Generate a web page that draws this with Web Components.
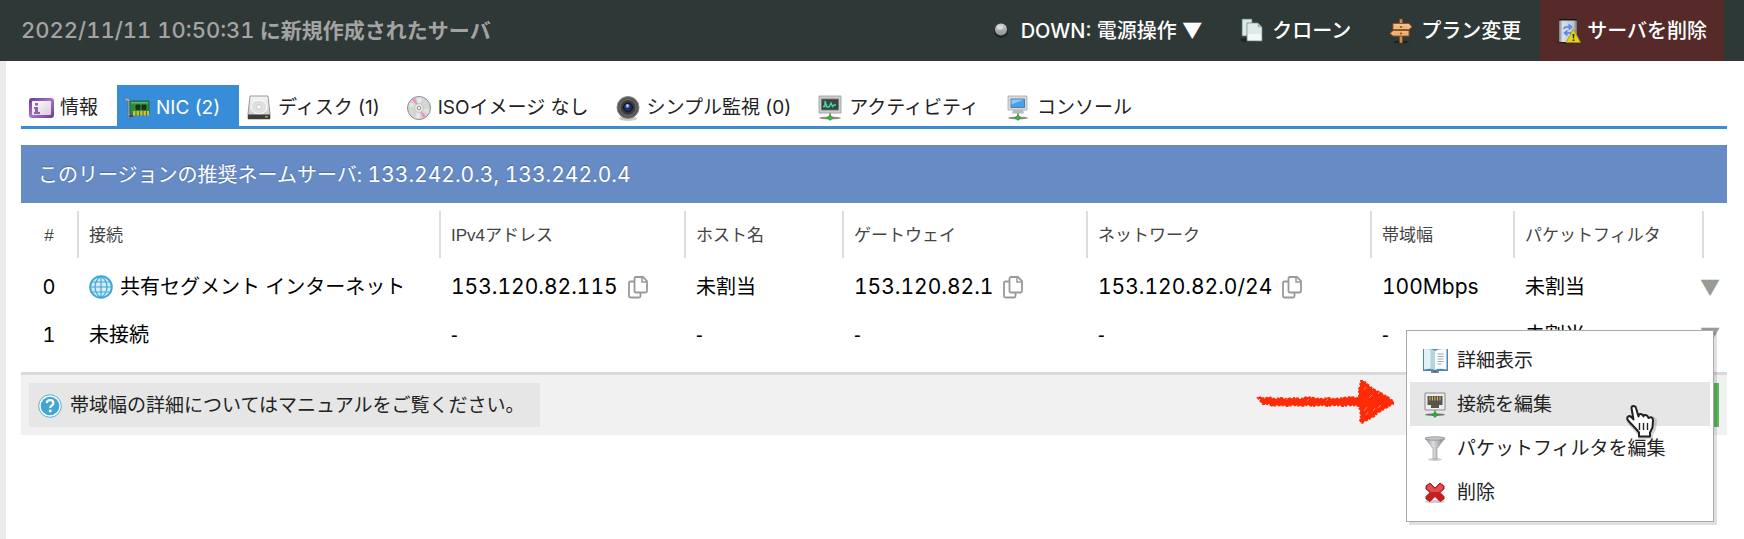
<!DOCTYPE html>
<html lang="ja">
<head>
<meta charset="utf-8">
<title>サーバ - NIC</title>
<meta name="viewport" content="width=device-width, initial-scale=1">
<style>
  body {
    margin: 0;
    background: #fff;
    color: #000;
    font-family: "Liberation Sans", "Noto Sans CJK JP", sans-serif;
    font-size: 20px;
    line-height: 24px;
  }
</style>
</head>
<body>
<server-page></server-page>

<script>
const define = (name, html, setup) => {
  const template = document.createElement('template');
  template.innerHTML = html;
  customElements.define(name, class extends HTMLElement {
    constructor() {
      super();
      this.attachShadow({ mode: 'open' }).append(template.content.cloneNode(true));
    }
    connectedCallback() {
      if (setup) setup(this, this.shadowRoot);
    }
  });
};

/* Icon drawings, all on a 24 x 24 grid. */
const ICONS = {
  dot: `<defs><linearGradient id="g" x2="0" y2="1"><stop stop-color="#d2d2d2"/><stop offset="1" stop-color="#8d8d8d"/></linearGradient></defs>
    <ellipse cx="12" cy="13" rx="7" ry="6" fill="#1d2625"/><circle cx="12" cy="10.500" r="6" fill="url(#g)"/><ellipse cx="11" cy="8.500" rx="3" ry="2" fill="#ddd"/>`,
  clone: `<ellipse cx="10" cy="21" rx="10" ry="2" fill="#1b2423"/>
    <path d="M2 0h10v17H2z" fill="#dbe8e8" stroke="#55706e" stroke-width=".7"/>
    <path d="M7 4h11l4 4v14H7z" fill="#f1f8f7" stroke="#6b8583" stroke-width=".8"/><path d="M17.500 4v4.500H22z" fill="#9fb4b2"/><path d="M8 5h9v3l4 2v5H8z" fill="#dcebea"/>`,
  sign: `<ellipse cx="12" cy="23" rx="8" ry="1.500" fill="#1c2322"/>
    <path d="M10.500 0h3v24h-3z" fill="#d58a45" stroke="#7b451a" stroke-width=".6"/>
    <path d="M4 4.500h16l3 3.300-3 2.700H4z" fill="#f6bf85" stroke="#8d5425" stroke-width="1"/>
    <path d="M20 11.500H4L1 14.500l3 2.500h16z" fill="#f3b478" stroke="#8d5425" stroke-width="1"/>
    <path d="M6 8h12M5 14.500h13" stroke="#dfa067" stroke-width=".8"/><circle cx="12" cy="8" r=".9" fill="#6f3d16"/><circle cx="12" cy="14.500" r=".9" fill="#6f3d16"/>`,
  server: `<defs><linearGradient id="g"><stop stop-color="#777d86"/><stop offset=".2" stop-color="#d9dee7"/><stop offset=".8" stop-color="#bcc3cd"/><stop offset="1" stop-color="#6d737c"/></linearGradient></defs>
    <ellipse cx="10" cy="23" rx="10" ry="1.500" fill="#2b1514"/><path d="M2 0h18v23H2z" fill="url(#g)"/><path d="M2 0h18v1.500H2z" fill="#15171a"/>
    <path d="M7 10q0-2 2-2h4M11.500 5.500l3 2.500-3 2.500M14 14H8M10.500 11.500 7.500 14l3 2.500" fill="none" stroke="#4c82e8" stroke-width="1.500"/>
    <path d="M16.500 10 23.500 23.500H9z" fill="#e5d21e" stroke="#a09310" stroke-width=".8"/><path d="M15.500 15h2l-.4 4.500h-1.200zM15.600 20.500h1.800v1.600h-1.800z" fill="#333"/>`,
  info: `<defs><linearGradient id="g" x2="1" y2="1"><stop stop-color="#6a3990"/><stop offset=".5" stop-color="#a775c4"/><stop offset="1" stop-color="#6a3990"/></linearGradient><linearGradient id="h" x2="1" y2="1"><stop stop-color="#fff"/><stop offset="1" stop-color="#d8cce2"/></linearGradient></defs>
    <rect x="0" y="2" width="25" height="20" rx="3" fill="url(#g)"/><rect x="3" y="5" width="19" height="14" rx="1" fill="url(#h)"/>
    <path d="M6 7h3v2.500H6zM5 11h4v5h2v2H5v-2h1v-3H5z" fill="#8f62ae"/>`,
  nic: `<path d="M0 2h3l2 2v18H3V5H0z" fill="#9aaebf" stroke="#51687d" stroke-width=".6"/>
    <path d="M5 5h19v13H5z" fill="#2d8a3e" stroke="#1b5a28" stroke-width=".8"/><path d="M6 6h17v1.500H6z" fill="#60b56c"/>
    <path d="M11 9h4v4.500h-4zM17 9h4v4.500h-4z" fill="#20301f" stroke="#123016" stroke-width=".8"/><path d="M8 15h16v4.500H8z" fill="#d3bd3c"/><path d="M11 15v5M14.500 15v5M18 15v5M21.500 15v5" stroke="#397b32" stroke-width="1.100"/><path d="M4 20h4" stroke="#35505a" stroke-width="2"/>`,
  disk: `<defs><linearGradient id="g" x2="0" y2="1"><stop stop-color="#f5f5f5"/><stop offset="1" stop-color="#c4c4c4"/></linearGradient></defs>
    <path d="M3 0h18l2 18v5H1v-5z" fill="url(#g)" stroke="#8f8f8f" stroke-width=".9"/><ellipse cx="12" cy="11" rx="8" ry="7" fill="#e0e0e0" stroke="#fff" stroke-width="1"/><ellipse cx="12" cy="11" rx="2.500" ry="2.300" fill="#fafafa" stroke="#bbb" stroke-width=".7"/>
    <path d="M1 18.500h22v4.500H1z" fill="#3c3c3c"/><path d="M18 20h3v1.500h-3z" fill="#7ac52c"/>`,
  disc: `<circle cx="12" cy="12" r="11.500" fill="#d6d6d6" stroke="#8c8c8c" stroke-width="1"/><path d="M12 12 5 3.700 8 1.900zM12 12l7 8.300-3 1.800z" fill="#f08fc4"/><path d="M12 12 10 1.500l5 .2zM12 12 13 22.500l-5-.5z" fill="#e9e9e9"/><path d="M12 12 1.500 10.500l1.500-4zM12 12 22.500 13.500 21 17.500z" fill="#e2e9d0"/>
    <circle cx="12" cy="12" r="4.300" fill="#eee" stroke="#bbb" stroke-width=".8"/><circle cx="12" cy="12" r="1.800" fill="#fff" stroke="#888" stroke-width="1"/>`,
  lens: `<ellipse cx="12" cy="22.500" rx="9" ry="2.500" fill="#ccc"/><circle cx="12" cy="11.500" r="11" fill="#575757" stroke="#8b8b8b" stroke-width="1"/><circle cx="12" cy="11.500" r="8" fill="#3c3c3c" stroke="#707070" stroke-width="1"/><circle cx="12" cy="11.500" r="4.500" fill="#1c2c5d" stroke="#111" stroke-width="1"/><circle cx="11.500" cy="10" r="2" fill="#6f92d0"/><circle cx="11.500" cy="9.500" r=".9" fill="#dbe6fb"/>`,
  activity: `<path d="M1 0h22v17H1z" fill="#cdcdcd" stroke="#999" stroke-width=".8"/><path d="M3.500 3h17v11h-17z" fill="#3b4543" stroke="#737373" stroke-width=".8"/><path d="M5 10.500h2V5l2 6h2l2-4 1.500 3.500L16 9h2" fill="none" stroke="#43e0a2" stroke-width="1.300"/>
    <path d="M11 17h2v4h-2z" fill="#999"/><ellipse cx="12" cy="22" rx="11" ry="1.500" fill="#8c8c8c"/><path d="M12 19 15 21.700 12 24.400 9 21.700z" fill="#31bb36" stroke="#27852b" stroke-width=".6"/>`,
  console: `<path d="M2 0h19v14H2z" fill="#d8d8d8" stroke="#aaa" stroke-width=".8"/><path d="M5 3h13.500v8.500H5z" fill="#4b9fe5" stroke="#2d75b3" stroke-width=".8"/><path d="M5.500 3.500H18L5.500 8.500z" fill="#8fc6f3"/><path d="M7 14h10l1 3.500H6z" fill="#b9b9b9"/>
    <path d="M11 17h2v4h-2z" fill="#999"/><ellipse cx="12" cy="22" rx="10" ry="1.500" fill="#8c8c8c"/><path d="M12 19 15 21.700 12 24.400 9 21.700z" fill="#31bb36" stroke="#27852b" stroke-width=".6"/>`,
  globe: `<circle cx="12" cy="12" r="10.800" fill="#d4ecf6" stroke="#42a8d6" stroke-width="2"/><path d="M12 1v22M3 7h18M1 12h22M3 17h18M12 1c-8 6-8 16 0 22M12 1c8 6 8 16 0 22" fill="none" stroke="#42a8d6" stroke-width="1.200"/>`,
  copy: `<path d="M10 2h7l4 4v10q0 1.500-1.500 1.500H10Q8.500 17.500 8.500 16V3.500Q8.500 2 10 2z" fill="#fff" stroke="#999" stroke-width="1.800"/><path d="M16 2v5h5" fill="none" stroke="#999" stroke-width="1.500"/><path d="M8 6.500H4.500Q3 6.500 3 8v13q0 1.500 1.500 1.500H13q1.500 0 1.500-1.500v-3" fill="none" stroke="#999" stroke-width="1.800"/>`,
  help: `<circle cx="12" cy="12" r="11.300" fill="#fff" stroke="#55aed8" stroke-width="1"/><circle cx="12" cy="12" r="9.300" fill="#42a6d5"/><path d="M8.700 9.200q.3-3 3.400-3 3.300 0 3.300 2.800 0 1.500-1.600 2.500-1.600 1-1.600 2.500" fill="none" stroke="#fff" stroke-width="2.200"/><path d="M10.900 15.600h2.600v2.600h-2.600z" fill="#fff"/>`,
  book: `<path d="M0 0h25v22H14l-2 1.500L10 22H0z" fill="#4c87b8"/><path d="M1 0q8.500-.5 11 2v19Q9 19 1 20.500z" fill="#e3f1f4"/><path d="M23.500 0Q14.500-.5 12 2v19q3-2 11.500-.5z" fill="#fafcfc"/><path d="M7.500 .5Q11 1 12 2v19q-1-1-4.500-1z" fill="#b3d6dc"/><path d="M14.500 5h6M14.500 7.500h6M14.500 10h6M14.500 12.500h6M14.500 15h4" stroke="#9aabb0" stroke-width="1.200"/><path d="M8 23h8" stroke="#333" stroke-width="1.200"/>`,
  port: `<path d="M2 0h20v17H2z" fill="#ededed" stroke="#8c8c8c" stroke-width="1"/><path d="M4.500 3h15v9H16v3H8v-3H4.500z" fill="#5c554c"/><path d="M7 3.500v4M9.500 3.500v4M12 3.500v4M14.500 3.500v4M17 3.500v4" stroke="#d4b765" stroke-width="1"/>
    <path d="M11 17h2v4h-2z" fill="#999"/><ellipse cx="12" cy="21.700" rx="10" ry="1.300" fill="#6d6d6d"/><path d="M12 19 15 21.700 12 24.400 9 21.700z" fill="#25b62c" stroke="#27852b" stroke-width=".6"/>`,
  funnel: `<defs><linearGradient id="g"><stop stop-color="#8f8f94"/><stop offset=".4" stop-color="#dcdce2"/><stop offset="1" stop-color="#808086"/></linearGradient></defs>
    <ellipse cx="12" cy="22.500" rx="7" ry="1.500" fill="#ccc"/><path d="M2 1 10 11.500V22h4V11.500L22 1z" fill="url(#g)" stroke="#909096" stroke-width=".6"/><ellipse cx="12" cy="1.500" rx="10" ry="1.700" fill="#c7c7cb" stroke="#8b8b90" stroke-width=".8"/>`,
  cross: `<ellipse cx="12" cy="20.500" rx="10" ry="1.600" fill="#ccc"/><path d="M3 5 7 2l5 5 5-5 4 3v3l-4 3.500 4 4V18l-4 2.500-5-5-5 5L3 18v-2.500l4-4L3 8z" fill="#c41e20" stroke="#b01c1c" stroke-width="1" stroke-linejoin="round"/><path d="M4 5.500 7 3l5 5 5-5 3 2.500V8l-4 3H8L4 8z" fill="#e75a5b" opacity=".8"/>`
};

define('ui-icon', `
  <style>
    :host { display: block; flex: none; width: 24px; height: 24px; }
    svg { display: block; width: 100%; height: 100%; overflow: visible; }
  </style>
  <svg viewBox="0 0 24 24" aria-hidden="true"></svg>`,
  (host, root) => { root.querySelector('svg').innerHTML = ICONS[host.getAttribute('name')] || ''; });

define('header-action', `
  <style>
    :host { display: block; }
    button {
      display: flex; align-items: center; gap: 8px; height: 61px; padding: 0 19px;
      border: 0; background: none; color: #fff; font: inherit; white-space: nowrap; cursor: pointer;
    }
    :host([danger]) button { background: #562a28; gap: 6px; padding: 0 17px; }
  </style>
  <button type="button"><span></span><slot></slot></button>`,
  (host, root) => { root.querySelector('span').innerHTML = `<ui-icon name="${host.getAttribute('icon')}"></ui-icon>`; });

define('server-header', `
  <style>
    :host {
      display: flex; align-items: center; justify-content: space-between;
      padding: 0 20px 0 21px; background: #2e3837; color: #fff;
      font-family: Inter, "Noto Sans CJK JP", sans-serif;
    }
    h1 { margin: 0; color: #a3a3a3; font: 600 21px/24px Inter, "Noto Sans CJK JP", sans-serif; white-space: nowrap; }
    nav { display: flex; font-weight: 500; }
    .mark { font-family: "Noto Sans CJK JP", sans-serif; }
    ::slotted(time) { font-size: 22px; font-weight: 500; font-variant-numeric: tabular-nums; }
  </style>
  <h1><slot></slot></h1>
  <nav aria-label="サーバ操作">
    <header-action icon="dot"><span>DOWN: 電源操作 <span class="mark">▼</span></span></header-action>
    <header-action icon="clone">クローン</header-action>
    <header-action icon="sign">プラン変更</header-action>
    <header-action icon="server" danger>サーバを削除</header-action>
  </nav>`);

define('tab-item', `
  <style>
    :host { display: block; }
    a {
      box-sizing: border-box; display: flex; align-items: center; gap: 7px; height: 41px; padding: 4px 19px 0 8px;
      color: #222; font-family: Inter, "Noto Sans CJK JP", sans-serif; font-size: 19px; text-decoration: none; white-space: nowrap;
    }
    :host([selected]) a { background: #388dd8; color: #fff; }
  </style>
  <a href="#"><span></span><slot></slot></a>`,
  (host, root) => {
    root.querySelector('span').innerHTML = `<ui-icon name="${host.getAttribute('icon')}"></ui-icon>`;
    if (host.hasAttribute('selected')) root.querySelector('a').setAttribute('aria-current', 'page');
  });

define('tab-bar', `
  <style>:host { display: flex; border-bottom: 3px solid #388dd8; }</style>
  <slot></slot>`);

define('name-servers', `
  <style>
    :host { display: block; margin-top: 16px; padding: 18px 17px 16px; background: #678bc4; color: #fff; text-shadow: 0 -1px 1px #4a6ba0; }
    p { margin: 0; font: 20px/24px Inter, "Noto Sans CJK JP", sans-serif; font-variant-numeric: tabular-nums; }
    ::slotted(span) { font-size: 21px; }
  </style>
  <p><slot></slot></p>`);

define('copy-text', `
  <style>
    :host { display: inline-flex; align-items: center; gap: 8px; vertical-align: middle; font-size: 21px; }
    button { display: block; padding: 0; border: 0; background: none; cursor: pointer; }
  </style>
  <slot></slot><button type="button" aria-label="コピー"><ui-icon name="copy"></ui-icon></button>`);

define('nic-table', `
  <style>
    :host { display: block; }
    table { width: 100%; table-layout: fixed; border-collapse: collapse; }
    th { padding: 8px 0 3px; color: #444; font-size: 17px; font-weight: 400; text-align: left; white-space: nowrap; }
    th > div { box-sizing: border-box; height: 47px; padding-left: 10px; border-left: 2px solid #ddd; line-height: 49px; }
    th:first-child > div { padding: 0; border: 0; text-align: center; }
    td {
      box-sizing: border-box; height: 48px; padding: 3px 0 0 12px; white-space: nowrap;
      font-family: Inter, "Noto Sans CJK JP", sans-serif; font-variant-numeric: tabular-nums;
    }
    td:first-child { padding-left: 0; text-align: center; }
    td:last-child { padding-left: 0; padding-right: 7px; }
    .seg { display: flex; align-items: center; gap: 7px; }
    .more { display: flex; justify-content: flex-end; }
    .speed { font-size: 21px; }
    .none { font-family: "Liberation Sans", sans-serif; }
    button { padding: 0; border: 0; background: none; color: #999; font: 20px/24px "Noto Sans CJK JP", sans-serif; cursor: pointer; }
    .index { width: 56px; } .ip { width: 245px; } .host { width: 158px; } .gw { width: 244px; }
    .net { width: 284px; } .rate { width: 143px; } .filter { width: 189px; } .act { width: 25px; }
  </style>
  <table>
    <colgroup><col class="index"><col><col class="ip"><col class="host"><col class="gw"><col class="net"><col class="rate"><col class="filter"><col class="act"></colgroup>
    <thead><tr>
      <th scope="col"><div>#</div></th><th scope="col"><div>接続</div></th><th scope="col"><div>IPv4アドレス</div></th>
      <th scope="col"><div>ホスト名</div></th><th scope="col"><div>ゲートウェイ</div></th><th scope="col"><div>ネットワーク</div></th>
      <th scope="col"><div>帯域幅</div></th><th scope="col"><div>パケットフィルタ</div></th><th scope="col"><div></div></th>
    </tr></thead>
    <tbody>
      <tr>
        <td>0</td><td><div class="seg"><ui-icon name="globe"></ui-icon>共有セグメント インターネット</div></td>
        <td><copy-text>153.120.82.115</copy-text></td><td>未割当</td><td><copy-text>153.120.82.1</copy-text></td>
        <td><copy-text>153.120.82.0/24</copy-text></td><td class="speed">100Mbps</td><td>未割当</td>
        <td><div class="more"><button type="button" aria-label="操作">▼</button></div></td>
      </tr>
      <tr>
        <td>1</td><td>未接続</td><td class="none">-</td><td class="none">-</td><td class="none">-</td><td class="none">-</td><td class="none">-</td><td>未割当</td>
        <td><div class="more"><button type="button" aria-label="操作" aria-expanded="true">▼</button></div></td>
      </tr>
    </tbody>
  </table>`);

define('panel-footer', `
  <style>
    :host {
      display: flex; justify-content: space-between; margin-top: 15px; padding: 8px;
      border-top: 3px solid #d9d9d9; background: #f1f1f1;
    }
    a {
      box-sizing: border-box; display: flex; align-items: center; gap: 8px; height: 44px; padding: 2px 16px 0 9px;
      background: #e6e6e6; color: #222; font-size: 19px; text-decoration: none; white-space: nowrap;
    }
    button { width: 120px; padding: 0; border: 0; background: #5cb85c; }
  </style>
  <a href="#"><ui-icon name="help"></ui-icon><slot></slot></a>
  <button type="button" aria-label="追加"></button>`);

define('menu-item', `
  <style>
    :host { display: block; }
    button {
      display: flex; align-items: center; gap: 10px; width: 100%; height: 44px; padding: 2px 13px 0;
      border: 0; background: none; color: #222; font: inherit; font-size: 19px; white-space: nowrap; cursor: pointer;
    }
    :host([hovered]) button { background: #e6e6e6; }
  </style>
  <button type="button" role="menuitem"><span></span><slot></slot></button>`,
  (host, root) => { root.querySelector('span').innerHTML = `<ui-icon name="${host.getAttribute('icon')}"></ui-icon>`; });

define('context-menu', `
  <style>
    :host {
      position: absolute; z-index: 2; top: 127px; right: 13px; box-sizing: border-box; width: 308px; padding: 7px 3px;
      border: 1px solid #aaa; background: #fff; box-shadow: 3px 3px 0 rgba(0, 0, 0, .12);
    }
    svg { position: absolute; overflow: visible; }
    .pointer { left: 218px; top: 74px; }
    .arrow { left: -150px; top: 49px; }
  </style>
  <slot></slot>
  <svg class="pointer" width="32" height="36" viewBox="0 0 32 36" aria-hidden="true">
    <path d="M10 27 3 19q-3-3-1-5 3-2 6 3L6 5h6l2 7h12q5-1 6 4l-1 9-3 5v4H13v-4z" fill="#777" opacity=".3"/>
    <path d="M11 24 4 16.500q-3-3-1-5 2.500-1.500 5.500 3L6.500 3Q6.500 1 8.500 1T11 3l2.500 8.500Q13.500 9 15.500 9t3 2.500q0-2 2.200-1.500t2.800 3q4-2 4.500 2l-.5 7.500-2.500 5v4H14v-4z" fill="#fff" stroke="#222" stroke-width="2" stroke-linejoin="round"/>
    <path d="M14.500 18v7M18.500 18v7M22.500 18v7" stroke="#222" stroke-width="1.400"/>
  </svg>
  <svg class="arrow" width="138" height="44" viewBox="0 0 138 44" aria-hidden="true">
    <path d="M1 18 5 17 7 19 12 17 17 19 24 18 30 19 37 18 44 19 50 17 57 18 64 19 71 18 78 19 86 18 93 17 102 18 102 10 104 1 107 1 110 4 116 9 122 12 129 16 136 21 136 24 129 28 122 32 116 37 110 40 105 43 103 40 104 35 102 26 93 25 86 26 78 25 71 26 64 25 57 26 50 25 44 26 37 25 30 26 22 25 16 26 11 24 6 24 3 22 4 20Z" fill="#fe2a08"/>
    <path d="M1 18 5 17 7 19 12 17 17 19 24 18 30 19 37 18 44 19 50 17 57 18 64 19 71 18 78 19 86 18 93 17 102 18 102 10 104 1 107 1 110 4 116 9 122 12 129 16 136 21 136 24 129 28 122 32 116 37 110 40 105 43 103 40 104 35 102 26 93 25 86 26 78 25 71 26 64 25 57 26 50 25 44 26 37 25 30 26 22 25 16 26 11 24 6 24Z" fill="none" stroke="#fe2a08" stroke-width="2" stroke-dasharray="3 2 2 1"/>
    <path d="m107 10 2-3m-2 24 3-4m6 4 2-3m3-14 2-3m-11 7 3-3m6 13 3-3m-15 10 2-3m-82-12 2-2m19 3 2-2m17 2 2-2" stroke="#ff8267" stroke-width="1"/>
  </svg>`,
  host => host.setAttribute('role', 'menu'));

define('server-page', `
  <style>
    :host { display: flex; flex-direction: column; min-height: 100vh; }
    main { flex: 1; padding: 24px 17px 24px 15px; border-left: 6px solid #ebebeb; }
    section { position: relative; }
  </style>
  <server-header><time datetime="2022-11-11T10:50:31">2022/11/11 10:50:31</time> に新規作成されたサーバ</server-header>
  <main>
    <tab-bar>
      <tab-item icon="info">情報</tab-item>
      <tab-item icon="nic" selected>NIC (2)</tab-item>
      <tab-item icon="disk">ディスク (1)</tab-item>
      <tab-item icon="disc">ISOイメージ なし</tab-item>
      <tab-item icon="lens">シンプル監視 (0)</tab-item>
      <tab-item icon="activity">アクティビティ</tab-item>
      <tab-item icon="console">コンソール</tab-item>
    </tab-bar>
    <name-servers>このリージョンの推奨ネームサーバ: <span>133.242.0.3, 133.242.0.4</span></name-servers>
    <section>
      <nic-table></nic-table>
      <panel-footer>帯域幅の詳細についてはマニュアルをご覧ください。</panel-footer>
      <context-menu>
        <menu-item icon="book">詳細表示</menu-item>
        <menu-item icon="port" hovered>接続を編集</menu-item>
        <menu-item icon="funnel">パケットフィルタを編集</menu-item>
        <menu-item icon="cross">削除</menu-item>
      </context-menu>
    </section>
  </main>
</server-page>`);
</script>
</body>
</html>
